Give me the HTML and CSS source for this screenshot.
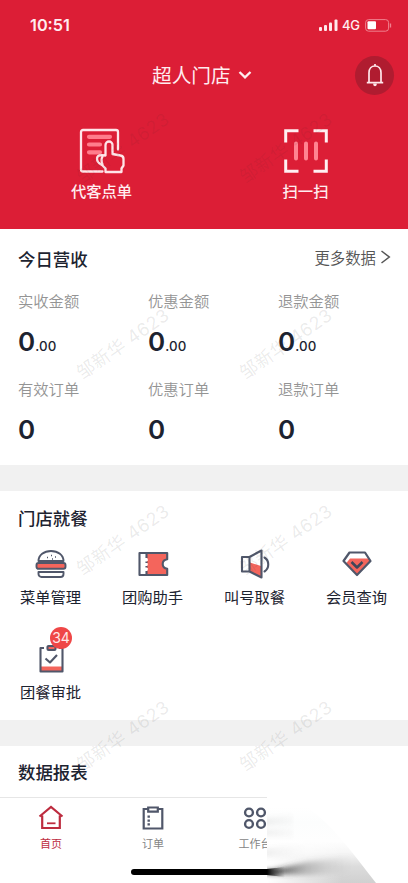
FILE: index.html
```html
<!DOCTYPE html>
<html lang="zh-CN">
<head>
<meta charset="utf-8">
<title>超人门店</title>
<link rel="stylesheet" href="styles.css">
</head>
<body>
<div class="phone">
  <header class="hero">
    <div class="status">
      <span class="time">10:51</span>
      <div class="signals">
        <svg width="19" height="13" viewBox="0 0 19 13" fill="#ffe9ec"><rect x="0" y="8" width="3" height="4" rx="1"/><rect x="5" y="6" width="3" height="6" rx="1"/><rect x="10" y="3.500" width="3" height="8.500" rx="1"/><rect x="15.500" y="0.500" width="3" height="11.500" rx="1"/></svg>
        <span class="net">4G</span>
        <svg width="27" height="13" viewBox="0 0 27 13"><rect x=".6" y=".6" width="23" height="11.600" rx="3" fill="none" stroke="#f0808e"/><rect x="2.500" y="2.300" width="8.500" height="8" rx="1" fill="#fff"/><path d="M25.500 4.500v4" stroke="#f0808e" stroke-width="1.300"/></svg>
      </div>
    </div>
    <div class="titlebar">
      <div class="store">超人门店<svg width="14" height="10" viewBox="0 0 14 10" fill="none" stroke="#ffeef0" stroke-width="2.300"><path d="M1.500 2l5.500 5.300L12.500 2"/></svg></div>
      <div class="bell"><svg width="20" height="24" viewBox="0 0 20 24" fill="none" stroke="#ffe8eb" stroke-width="1.700"><path d="M4 19.500V9.800C4 5.600 6.500 3 10 3s6 2.600 6 6.800v9.700M1.800 19.700h16.400M10 1v2"/><path d="M8.300 20.500h3.400v1a1.700 1.700 0 0 1-3.400 0z" fill="#ffe8eb" stroke="none"/></svg></div>
    </div>
    <div class="actions">
      <div class="action">
        <svg class="order-icon" width="46" height="46" viewBox="0 0 46 46" fill="none" stroke="#ffe5e9" stroke-width="2.300" stroke-linecap="round" stroke-linejoin="round"><path d="M39 21.500V4a2 2 0 0 0-2-2H4a2 2 0 0 0-2 2v37.500a2 2 0 0 0 2 2h19.500"/><g stroke="#ff7d8c" stroke-width="4.200"><path d="M10 8.800h21M10 16.500h11M10 24.300h11"/></g><path fill="#dc1e36" d="M26.500 27.500V17a3.500 3.500 0 0 1 7 0v9l8 1.500a3.500 3.500 0 0 1 3 3.500v6.500l-2 3v3.500h-16v-3.500l-3.500-3.500c-3-1.500-5-3.500-5-6s2-3.800 4.500-3.800z"/><path d="M23.500 28.500c-1.200 2-1.200 5 0 8"/></svg>
        <span>代客点单</span>
      </div>
      <div class="action">
        <svg width="46" height="46" viewBox="0 0 46 46" fill="none" stroke="#fff0f2" stroke-width="3" stroke-linecap="square"><path d="M2.700 13V2.700H14M32 2.700h11.300V13M43.300 33v10.300H32M14 43.300H2.700V33"/><path d="M13 15.500v15M23 15.500v15M33 15.500v15" stroke="#ff8491" stroke-width="4" stroke-linecap="round"/></svg>
        <span>扫一扫</span>
      </div>
    </div>
  </header>

  <main>
    <section class="panel revenue">
      <div class="panel-head">
        <h2>今日营收</h2>
        <div class="more">更多数据<svg width="11" height="14" viewBox="0 0 11 14" fill="none" stroke="#555" stroke-width="1.500"><path d="M1.500 1l7.800 6-7.800 6"/></svg></div>
      </div>
      <div class="metrics">
        <div class="metric"><span class="label">实收金额</span><span class="value">0<small>.00</small></span></div>
        <div class="metric"><span class="label">优惠金额</span><span class="value">0<small>.00</small></span></div>
        <div class="metric"><span class="label">退款金额</span><span class="value">0<small>.00</small></span></div>
        <div class="metric"><span class="label">有效订单</span><span class="value">0</span></div>
        <div class="metric"><span class="label">优惠订单</span><span class="value">0</span></div>
        <div class="metric"><span class="label">退款订单</span><span class="value">0</span></div>
      </div>
    </section>

    <section class="panel dining">
      <h2>门店就餐</h2>
      <div class="tools">
        <div class="tool">
          <svg width="32" height="32" viewBox="0 0 32 32" fill="none" stroke="#50576a" stroke-width="1.900" stroke-linejoin="round"><path d="M3.500 13C3.500 7 9 3 16 3s12.500 4 12.500 10z"/><rect x="1.500" y="15" width="29" height="5.800" rx="2" fill="#f4655c"/><path d="M3.500 24h25v2a3 3 0 0 1-3 3h-19a3 3 0 0 1-3-3z"/><path d="M12 9.500h1M16 7.500h1M17 11h1M20 9h1" stroke-width="1.300"/></svg>
          <span>菜单管理</span>
        </div>
        <div class="tool">
          <svg width="32" height="32" viewBox="0 0 32 32" fill="none" stroke="#50576a" stroke-width="2.100" stroke-linejoin="round"><path d="M10 5h20v6.200c-6 .8-6 8.800 0 9.600V27H10z" fill="#f4655c" stroke="none"/><path d="M2.500 5h27.700v6.200c-6 .8-6 8.800 0 9.600V27H2.500z"/><path d="M9.500 5v5M9.500 13.500v1.500M9.500 18v1.500M9.500 23v4"/><path d="M9.800 10.500v2.500M9.800 15.300v2.200M9.800 20v2.500" stroke="#fff" stroke-width="2"/></svg>
          <span>团购助手</span>
        </div>
        <div class="tool">
          <svg width="32" height="32" viewBox="0 0 32 32" fill="none" stroke="#50576a" stroke-width="2.100" stroke-linejoin="round"><path d="M11 14.500l11 3.500v11l-11-5z" fill="#f4655c" stroke="none"/><path d="M3 9h7.500v14.500H3zM10.500 9L22.500 2.500v27l-12-6z"/><path d="M25.500 9.500c5 3.200 5 10.800 0 14" stroke-linecap="round"/></svg>
          <span>叫号取餐</span>
        </div>
        <div class="tool">
          <svg width="32" height="32" viewBox="0 0 32 32" fill="none" stroke="#50576a" stroke-width="2.200" stroke-linejoin="round"><path d="M9 10.500h19l1.500 2.500L16 27 5 15.500z" fill="#f4655c" stroke="none"/><path d="M8.500 4.500h15.500L29.500 13 16 27 2.500 13z"/><path d="M10.500 14l5.500 5.500L21.500 14" stroke="#3f4659" stroke-width="2.500"/></svg>
          <span>会员查询</span>
        </div>
        <div class="tool second">
          <svg width="32" height="32" viewBox="0 0 32 32" fill="none" stroke="#50576a" stroke-width="2.100" stroke-linejoin="round"><path d="M6 23.500h21v5H6z" fill="#f4655c" stroke="none"/><path d="M9 5H5.500v23.500h22V5H24"/><rect x="12.500" y="3" width="8" height="4" rx="1" fill="#f4655c"/><path d="M10.500 15.500l4.500 4 7-7.500"/></svg>
          <i class="badge">34</i>
          <span>团餐审批</span>
        </div>
      </div>
    </section>

    <section class="panel reports"><h2>数据报表</h2></section>
  </main>

  <nav class="tabs">
    <div class="tab active">
      <svg width="26" height="26" viewBox="0 0 26 26" fill="none" stroke="#bd2c3f" stroke-width="2.200"><path d="M1.500 11.500L13 2l11.500 9.500M4.200 10.500V23h17.600V10.500"/><path d="M9 18.300h8.500" stroke-width="1.800"/></svg>
      <span>首页</span>
    </div>
    <div class="tab">
      <svg width="26" height="26" viewBox="0 0 26 26" fill="none" stroke="#50576a" stroke-width="2.200"><path d="M8 4H3.700v19.500h18.600V4H18M8.200 2.500h9.600v4.200H8.200z"/><path d="M8.700 10.500v2.200M8.700 14.500v2.200M8.700 18.300v2.200" stroke-width="2.400"/></svg>
      <span>订单</span>
    </div>
    <div class="tab">
      <svg width="26" height="26" viewBox="0 0 26 26" fill="none" stroke="#50576a" stroke-width="2.400"><circle cx="7" cy="7.500" r="3.900"/><circle cx="19" cy="7.500" r="3.900"/><circle cx="7" cy="19" r="3.900"/><circle cx="19" cy="19" r="3.900"/></svg>
      <span>工作台</span>
    </div>
    <div class="tab"></div>
  </nav>
  <div class="home-bar"></div>

  <svg class="smear" width="141" height="88" viewBox="0 0 141 88">
    <defs>
      <linearGradient id="fall" x1="0" y1="12" x2="0" y2="88" gradientUnits="userSpaceOnUse"><stop offset="0" stop-color="#fff"/><stop offset=".2" stop-color="#fcfdfd"/><stop offset=".45" stop-color="#fefefe"/><stop offset=".6" stop-color="#f6f6f6"/><stop offset=".78" stop-color="#dcdcdc"/><stop offset="1" stop-color="#d0d0d0"/></linearGradient>
      <linearGradient id="ink" x1="0" y1="0" x2="86" y2="0" gradientUnits="userSpaceOnUse"><stop offset="0" stop-color="#000" stop-opacity=".95"/><stop offset=".15" stop-color="#222" stop-opacity=".7"/><stop offset=".45" stop-color="#666" stop-opacity=".4"/><stop offset="1" stop-color="#bbb" stop-opacity="0"/></linearGradient>
      <linearGradient id="tip" x1="0" y1="0" x2="18" y2="0" gradientUnits="userSpaceOnUse"><stop offset="0" stop-color="#000"/><stop offset="1" stop-color="#333" stop-opacity="0"/></linearGradient>
      <linearGradient id="low" x1="0" y1="0" x2="1" y2="0"><stop offset="0" stop-color="#fff"/><stop offset=".15" stop-color="#fff" stop-opacity=".85"/><stop offset="1" stop-color="#fff" stop-opacity="0"/></linearGradient>
      <linearGradient id="trace" x1="0" y1="0" x2="1" y2="0"><stop offset="0" stop-color="#777" stop-opacity=".3"/><stop offset="1" stop-color="#aaa" stop-opacity="0"/></linearGradient>
      <filter id="soft" x="-20" y="0" width="160" height="100" filterUnits="userSpaceOnUse"><feGaussianBlur stdDeviation="1 2.500"/></filter>
    </defs>
    <path d="M0 0h141v88H0z" fill="#fff"/>
    <path d="M0 12h40C67 31 87 60 109 88H0z" fill="url(#fall)"/>
    <path d="M0 45h75v43H0z" fill="url(#low)"/>
    <path d="M-8 76L6 75l34-8 46-5v16l-44 2-36-1-14-1z" fill="url(#ink)" filter="url(#soft)"/>
    <path d="M0 74L18 72v10L0 80z" fill="url(#tip)"/>
    <path d="M-6 24L26 20v10L-6 30zM-6 35l32-1v8l-32-2zM-6 54l46-4v12l-46 0z" fill="url(#trace)" opacity=".45" filter="url(#soft)"/>
  </svg>

  <div class="mark m1">邹新华 4623</div><div class="mark m2">邹新华 4623</div>
  <div class="mark m3">邹新华 4623</div><div class="mark m4">邹新华 4623</div>
  <div class="mark m5">邹新华 4623</div><div class="mark m6">邹新华 4623</div>
  <div class="mark m7">邹新华 4623</div><div class="mark m8">邹新华 4623</div>
</div>
</body>
</html>
```
FILE: styles.css
```css
* { box-sizing: border-box; }
body { margin: 0; background: #fff; font-family: "Noto Sans CJK SC", sans-serif; color: #1d2330; }
svg { display: block; flex: none; }
.phone { position: relative; width: 408px; height: 883px; overflow: hidden; display: flex; flex-direction: column; }

.hero { height: 229px; flex: none; background: #dc1e36; color: #ffedf0; }
.status { height: 50px; padding: 0 16px 0 30px; display: flex; align-items: center; justify-content: space-between; }
.time { font: 600 16.3px/20px Inter, sans-serif; }
.signals { display: flex; align-items: center; }
.net { font: 500 13px/16px Inter, sans-serif; margin: 0 5px 0 4px; width: 18px; letter-spacing: -.2px; }
.titlebar { height: 50px; padding: 0 14px 0 152px; display: flex; align-items: center; justify-content: space-between; }
.store { display: flex; align-items: center; gap: 7px; font-size: 19.7px; font-weight: 400; line-height: 28px; }
.bell { width: 39px; height: 39px; border-radius: 50%; background: #b01c30; display: flex; align-items: center; justify-content: center; }
.actions { display: grid; grid-template-columns: 1fr 1fr; padding-top: 28px; }
.action { display: flex; flex-direction: column; align-items: center; gap: 5px; font-size: 15.3px; font-weight: 500; line-height: 22px; }
.action span { margin-left: -1px; }

main { flex: 1; min-height: 0; overflow: hidden; display: flex; flex-direction: column; gap: 26px; background: #f1f1f1; }
.panel { background: #fff; padding: 0 18px; flex: none; }
h2 { margin: 0; font-size: 17.4px; line-height: 26px; font-weight: 500; }
.revenue { height: 236px; padding-top: 17px; }
.panel-head { display: flex; justify-content: space-between; height: 26px; margin-right: -1px; }
.more { display: flex; align-items: center; gap: 4px; font-size: 15.4px; line-height: 22px; height: 22px; color: #555; font-weight: 350; }
.metrics { display: grid; grid-template-columns: repeat(3, 130px); grid-auto-rows: 88px; padding-top: 17px; }
.metric { display: flex; flex-direction: column; gap: 15px; }
.label { font-size: 15.3px; line-height: 22px; font-weight: 350; color: #949494; }
.value { font: 600 26px/32px Inter, sans-serif; color: #1d2330; display: flex; align-items: baseline; }
.value small { font-size: 13.3px; letter-spacing: .2px; font-weight: 500; }

.dining { height: 229px; padding-top: 14px; }
.tools { display: grid; grid-template-columns: repeat(4, 102px); grid-auto-rows: 94.500px; margin: 17px -18px 0; }
.tool { position: relative; display: flex; flex-direction: column; align-items: center; gap: 5px; font-size: 15.3px; line-height: 22px; }
.tool span { margin-left: -1px; }
.badge { position: absolute; left: 50px; top: -16px; width: 22px; height: 22px; border-radius: 50%; background: #ef4747; color: #ffe9e7; font: 400 14px/22px Inter, sans-serif; text-align: center; }
.reports { height: 100px; padding-top: 13px; }

.tabs { height: 86px; margin-top: -1px; flex: none; background: #fff; border-top: 1px solid #e6e6e6; display: grid; grid-template-columns: repeat(4, 102px); padding-top: 7px; }
.tab { display: flex; flex-direction: column; align-items: center; gap: 4px; font-size: 11px; line-height: 16px; color: #858585; }
.active { color: #bd2c3f; }
.home-bar { position: absolute; left: 131px; top: 869px; width: 146px; height: 6px; border-radius: 3px; background: #000; }
.smear { position: absolute; left: 267px; top: 795px; }

.mark { position: absolute; width: 130px; height: 28px; margin: -14px 0 0 -65px; text-align: center; font: 400 18px/28px Inter, "Noto Sans CJK SC", sans-serif; letter-spacing: .5px; color: rgba(60, 60, 60, .1); transform: rotate(-35deg); white-space: nowrap; pointer-events: none; }
.m1, .m2 { top: 148px; color: rgba(90, 30, 40, .09); }
.m3, .m4 { top: 344px; }
.m5, .m6 { top: 540px; }
.m7, .m8 { top: 736px; }
.m1, .m3, .m5, .m7 { left: 123px; }
.m2, .m4, .m6, .m8 { left: 286px; }
```
